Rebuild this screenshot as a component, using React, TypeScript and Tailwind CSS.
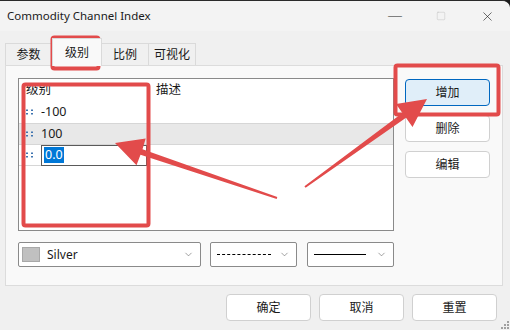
import React from 'react';
import { ChevronDown, Square, X } from 'lucide-react';

const font = { fontFamily: '"Segoe UI", "Noto Sans", "Noto Sans CJK SC", sans-serif' };

const Grip = () => (
  <svg width="11" height="8" viewBox="0 0 11 8" className="shrink-0">
    <rect x="1" y="1.5" width="2" height="1.5" fill="#3f74b0" />
    <rect x="1" y="5" width="2" height="1.5" fill="#3f74b0" />
    <rect x="6" y="1.5" width="2" height="1.5" fill="#3f74b0" />
    <rect x="6" y="5" width="2" height="1.5" fill="#3f74b0" />
  </svg>
);

const Chevron = () => <ChevronDown size={11} strokeWidth={1.2} className="text-[#555] shrink-0" />;

const SideButton = ({ label, active }: { label: string; active?: boolean }) => (
  <button
    className={
      active
        ? 'w-[85px] h-[27px] rounded-[4px] border border-[#0067c0] bg-[#e0eef9] text-[12px] text-[#1a1a1a]'
        : 'w-[85px] h-[27px] rounded-[4px] border border-[#d0d0d0] bg-white text-[12px] text-[#1a1a1a]'
    }
  >
    {label}
  </button>
);

export default function App() {
  return (
    <div className="w-[510px] h-[330px] bg-[#1c1c1c] overflow-hidden" style={font}>
      <div className="relative w-[510px] h-[330px] bg-[#f0f0f0] rounded-tr-[8px] border-t border-[#2a2a2a] overflow-hidden">
        {/* title bar */}
        <div className="h-[30px] bg-[#f3f3f3] flex items-center justify-between pl-[7px]">
          <span className="text-[11.5px] text-[#1a1a1a]">Commodity Channel Index</span>
          <div className="flex items-center h-[30px]">
            <span className="w-[46px] text-center text-[14px] leading-none text-[#1a1a1a]">─</span>
            <div className="w-[46px] flex justify-center"><Square size={10} strokeWidth={1} className="text-[#b8b8b8]" /></div>
            <div className="w-[46px] flex justify-center"><X size={15} strokeWidth={1} className="text-[#1a1a1a]" /></div>
          </div>
        </div>

        {/* tabs */}
        <div className="flex items-end pl-[5px] h-[34px] text-[12px] text-[#1a1a1a]">
          <div className="w-[47px] h-[22px] border border-b-0 border-[#dadada] bg-[#f0f0f0] flex items-center justify-center">参数</div>
          <div className="w-[50px] h-[28px] -mb-px border border-b-0 border-[#dadada] bg-[#f9f9f9] flex items-center justify-center z-10">级别</div>
          <div className="w-[47px] h-[22px] border border-b-0 border-l-0 border-[#dadada] bg-[#f0f0f0] flex items-center justify-center">比例</div>
          <div className="w-[47px] h-[22px] border border-b-0 border-l-0 border-[#dadada] bg-[#f0f0f0] flex items-center justify-center">可视化</div>
        </div>

        {/* panel */}
        <div className="mx-[5px] w-[498px] h-[221px] border border-[#dcdcdc] bg-[#f9f9f9] pt-[12px] pl-[12px]">
          <div className="flex gap-[11px]">
            <div className="w-[376px] h-[153px] border border-[#8a8a8a] bg-white text-[12.5px] text-[#1a1a1a]">
              <div className="h-[22px] flex items-center">
                <span className="w-[137px] pl-[7px]">级别</span>
                <span>描述</span>
              </div>
              <div className="h-[23px] border-b border-[#d6d6d6] flex items-center gap-[5px] pl-[6px]">
                <Grip />
                <span>-100</span>
              </div>
              <div className="h-[21px] border-b border-[#d6d6d6] bg-[#e8e8e8] flex items-center gap-[5px] pl-[6px]">
                <Grip />
                <span>100</span>
              </div>
              <div className="h-[21px] border-b border-[#d6d6d6] flex items-center gap-[5px] pl-[6px]">
                <Grip />
                <div className="w-[106px] h-[21px] border border-[#5a5a5a] flex items-center pl-[2px]">
                  <span className="bg-[#0078d7] text-white leading-[16px] px-px">0.0</span>
                </div>
              </div>
            </div>
            <div className="flex flex-col gap-[9px] pt-[1px]">
              <SideButton label="增加" active />
              <SideButton label="删除" />
              <SideButton label="编辑" />
            </div>
          </div>

          <div className="flex mt-[11px] text-[12px] text-[#1a1a1a]">
            <div className="w-[183px] h-[25px] border border-[#8a8a8a] rounded-[2px] bg-white flex items-center pl-[3px] pr-[6px]">
              <div className="w-[18px] h-[15px] bg-[#c0c0c0] border border-[#a8a8a8]" />
              <span className="ml-[7px] flex-1">Silver</span>
              <Chevron />
            </div>
            <div className="w-[87px] h-[25px] ml-[9px] border border-[#8a8a8a] rounded-[2px] bg-white flex items-center pl-[6px] pr-[6px]">
              <div className="flex-1 mr-[8px] border-t border-dashed border-black" />
              <Chevron />
            </div>
            <div className="w-[87px] h-[25px] ml-[10px] border border-[#8a8a8a] rounded-[2px] bg-white flex items-center pl-[6px] pr-[6px]">
              <div className="flex-1 mr-[10px] border-t border-black" />
              <Chevron />
            </div>
          </div>
        </div>

        {/* bottom buttons */}
        <div className="flex justify-end gap-[8px] pr-[13px] pt-[8px] text-[12px] text-[#1a1a1a]">
          <button className="w-[85px] h-[27px] rounded-[4px] border border-[#d0d0d0] bg-white">确定</button>
          <button className="w-[85px] h-[27px] rounded-[4px] border border-[#d0d0d0] bg-white">取消</button>
          <button className="w-[85px] h-[27px] rounded-[4px] border border-[#d0d0d0] bg-white">重置</button>
        </div>

        {/* size grip */}
        <svg className="absolute right-[1px] bottom-[1px]" width="9" height="9" viewBox="0 0 9 9">
          <rect x="7" y="1" width="2" height="2" fill="#a0a0a0" />
          <rect x="4" y="4" width="2" height="2" fill="#a0a0a0" />
          <rect x="7" y="4" width="2" height="2" fill="#a0a0a0" />
          <rect x="1" y="7" width="2" height="2" fill="#a0a0a0" />
          <rect x="4" y="7" width="2" height="2" fill="#a0a0a0" />
          <rect x="7" y="7" width="2" height="2" fill="#a0a0a0" />
        </svg>

        {/* annotations */}
        <svg className="absolute left-0 top-0 pointer-events-none" width="510" height="330" viewBox="0 0 510 330">
          <g fill="none" stroke="#e24b4b" strokeWidth="4" strokeLinejoin="round">
            <rect x="52.5" y="36.5" width="46" height="31" rx="2" />
            <rect x="23.5" y="83.5" width="125" height="141" rx="2" />
            <rect x="395.5" y="64.5" width="103" height="49" rx="2" />
          </g>
          <g fill="#e24b4b">
            <polygon points="277.3,196 142.5,148.2 145.7,137.5 115,142 136.5,164.3 140.5,153.8 276.7,198" />
            <polygon points="305.6,186.8 406,116.8 412.5,126 427,98 396,103 402.4,112 304.4,185.2" />
          </g>
        </svg>
      </div>
    </div>
  );
}
